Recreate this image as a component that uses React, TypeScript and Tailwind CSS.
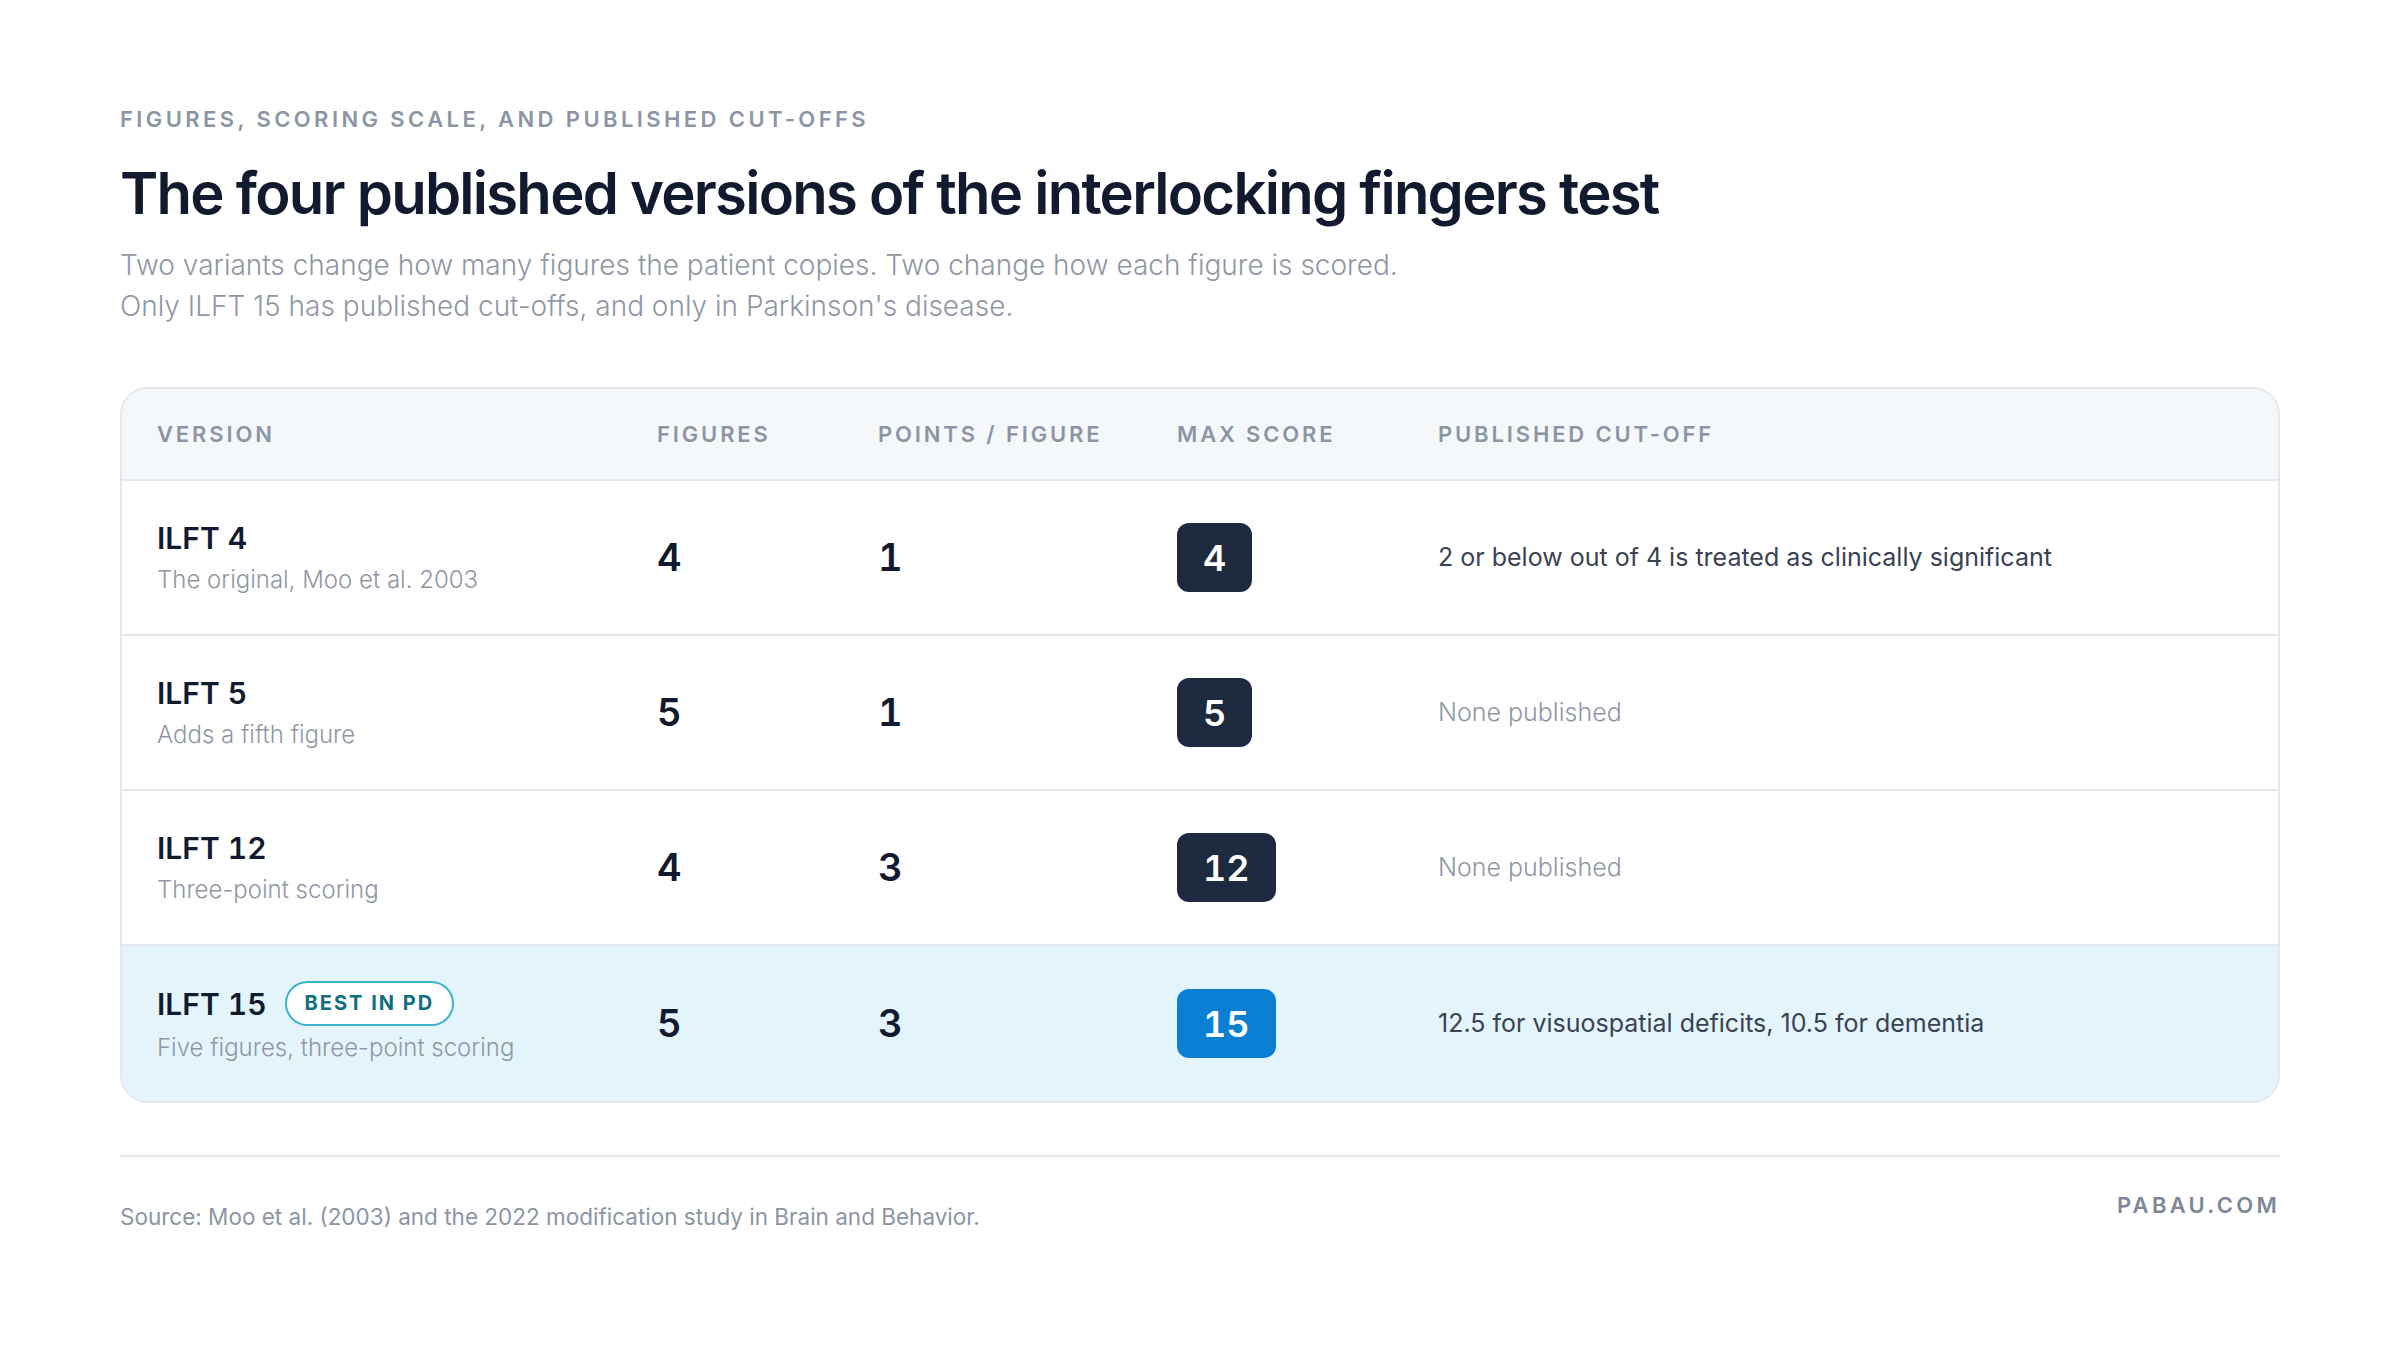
import React from "react";

interface Row {
  name: string;
  note: string;
  figures: number;
  points: number;
  max: number;
  cutoff: string;
  published: boolean;
  best?: boolean;
}

const rows: Row[] = [
  { name: "ILFT 4", note: "The original, Moo et al. 2003", figures: 4, points: 1, max: 4, cutoff: "2 or below out of 4 is treated as clinically significant", published: true },
  { name: "ILFT 5", note: "Adds a fifth figure", figures: 5, points: 1, max: 5, cutoff: "None published", published: false },
  { name: "ILFT 12", note: "Three-point scoring", figures: 4, points: 3, max: 12, cutoff: "None published", published: false },
  { name: "ILFT 15", note: "Five figures, three-point scoring", figures: 5, points: 3, max: 15, cutoff: "12.5 for visuospatial deficits, 10.5 for dementia", published: true, best: true },
];

const cols = "grid grid-cols-[500px_221px_299px_261px_1fr] items-center px-[35px]";

const App: React.FC = () => {
  return (
    <div className="h-[1362px] w-full bg-white px-[120px] pt-[104px] font-['Inter',sans-serif]">
      <div className="text-[22px] font-semibold uppercase leading-[30px] tracking-[0.155em] text-[#8b95a5]">
        Figures, scoring scale, and published cut-offs
      </div>
      <h1 className="mt-[22px] text-[58px] font-semibold leading-[74px] tracking-[-0.03em] text-[#111a2e]">
        The four published versions of the interlocking fingers test
      </h1>
      <p className="mt-[15px] text-[28px] font-light leading-[41px] text-[#8f97a6]">
        Two variants change how many figures the patient copies. Two change how each figure is scored.
        <br />
        Only ILFT 15 has published cut-offs, and only in Parkinson's disease.
      </p>

      <div className="mt-[60px] overflow-hidden rounded-[28px] border-2 border-[#e4e8ee]">
        <div className={`${cols} h-[90px] bg-[#f5f8fb] text-[22px] font-semibold uppercase tracking-[0.13em] text-[#8b95a5]`}>
          <div>Version</div>
          <div>Figures</div>
          <div>Points / Figure</div>
          <div>Max score</div>
          <div>Published cut-off</div>
        </div>
        {rows.map((r) => (
          <div
            key={r.name}
            className={`${cols} border-t-2 border-[#e4e8ee] ${r.best ? "h-[157px] bg-[#e3f5fb]" : "h-[155px] bg-white"}`}
          >
            <div>
              <div className="flex items-center gap-[18px]">
                <span className="text-[30px] font-semibold leading-[40px] tabular-nums text-[#111a2e]">{r.name}</span>
                {r.best && (
                  <span className="rounded-full border-2 border-[#3db4c9] bg-white px-[18px] py-[5px] text-[20px] font-bold uppercase leading-[31px] tracking-[0.1em] text-[#0f6f80]">
                    Best in PD
                  </span>
                )}
              </div>
              <div className="mt-[4px] text-[24px] font-light leading-[36px] text-[#8f97a6]">{r.note}</div>
            </div>
            <div className="text-[38px] font-semibold tabular-nums text-[#111a2e]">{r.figures}</div>
            <div className="text-[38px] font-semibold tabular-nums text-[#111a2e]">{r.points}</div>
            <div>
              <span
                className={`inline-flex h-[69px] items-center rounded-[12px] px-[26px] text-[36px] font-semibold tabular-nums text-white ${r.best ? "bg-[#0a7fd4]" : "bg-[#1e2a3f]"}`}
              >
                {r.max}
              </span>
            </div>
            <div className={`text-[25px] ${r.published ? "text-[#3a4253]" : "font-light text-[#8f97a6]"}`}>{r.cutoff}</div>
          </div>
        ))}
      </div>

      <div className="mt-[52px] border-t-2 border-[#e4e8ee] pt-[33px]">
        <div className="flex items-start justify-between">
          <div className="mt-[12px] text-[22.5px] leading-[30px] text-[#8b95a5]">
            Source: Moo et al. (2003) and the 2022 modification study in Brain and Behavior.
          </div>
          <div className="text-[22px] font-semibold leading-[30px] tracking-[0.15em] text-[#7d8799]">PABAU.COM</div>
        </div>
      </div>
    </div>
  );
};

export default App;
